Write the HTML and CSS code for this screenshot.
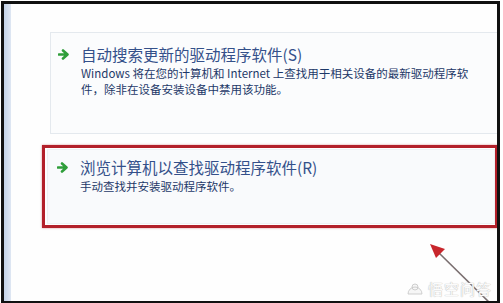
FILE: index.html
```html
<!DOCTYPE html>
<html lang="zh-CN">
<head>
    <meta charset="UTF-8">
    <title>更新驱动程序软件</title>
    <link rel="stylesheet" href="styles.css">
</head>
<body>
    <div class="screen">
        <div class="side-strip"></div>
        <div class="content">
            <div class="option">
                <div class="option-title">
                    <svg class="go-icon" width="12" height="11" viewBox="0 0 12 11"><path d="M1 5.5h7M5 1.5l4.5 4-4.5 4" fill="none" stroke="#2f9e3a" stroke-width="2.6" stroke-linecap="round" stroke-linejoin="round"/></svg>
                    <span>自动搜索更新的驱动程序软件(S)</span>
                </div>
                <p class="option-desc">Windows 将在您的计算机和 Internet 上查找用于相关设备的最新驱动程序软<br>件，除非在设备安装设备中禁用该功能。</p>
            </div>
            <div class="highlight">
                <div class="option option-browse">
                    <div class="option-title">
                        <svg class="go-icon" width="12" height="11" viewBox="0 0 12 11"><path d="M1 5.5h7M5 1.5l4.5 4-4.5 4" fill="none" stroke="#2f9e3a" stroke-width="2.6" stroke-linecap="round" stroke-linejoin="round"/></svg>
                        <span>浏览计算机以查找驱动程序软件(R)</span>
                    </div>
                    <p class="option-desc">手动查找并安装驱动程序软件。</p>
                </div>
            </div>
        </div>
        <!-- 标注箭头 -->
        <svg class="pointer" width="80" height="70" viewBox="0 0 80 70">
            <line x1="70" y1="68" x2="14" y2="13" stroke="#7a6f70" stroke-width="1.6"/>
            <path d="M5 4 L20 9 L11 18 Z" fill="#c8262c"/>
        </svg>
        <div class="watermark">
            <svg class="wm-logo" width="18" height="14" viewBox="0 0 18 14"><path d="M2 12 A7 7 0 0 1 16 12 Z M6 5 A3 3 0 1 1 12 5 A3 3 0 1 1 6 5" fill="#f6f6f6" stroke="#c4c4c4" stroke-width="0.8"/></svg>
            <span>悟空问答</span>
        </div>
    </div>
</body>
</html>
```

FILE: styles.css
```css
body {
    margin: 0;
    background: #fff;
    font-family: "Noto Sans CJK SC", "Noto Sans", sans-serif;
}

.screen {
    position: relative;
    display: flex;
    width: 499px;
    height: 302px;
    margin: 1px 3px 0 1px;
    box-sizing: border-box;
    border: 3px solid #111;
    border-bottom-width: 2px;
    background: #fefefe;
    overflow: hidden;
}

.side-strip {
    width: 7px;
    flex-shrink: 0;
    background: linear-gradient(to right, #c3d2e8, #dfe7f3);
}

.content {
    flex: 1;
    padding: 28px 0 0 39px;
    min-width: 0;
}

.option {
    background: #fbfcfd;
    border: 1px solid #e4e9ee;
    border-right: none;
    padding: 11px 0 0 7px;
    height: 102px;
    box-sizing: border-box;
}

.option-title {
    display: flex;
    align-items: center;
    gap: 11px;
    font-size: 15.5px;
    line-height: 20px;
    color: #34508a;
    white-space: nowrap;
}

.go-icon {
    flex-shrink: 0;
}

.option-desc {
    margin: 1px 0 0 23px;
    font-size: 11.5px;
    line-height: 16px;
    color: #1d3868;
    white-space: nowrap;
}

.highlight {
    margin: 11px -1px 0 -8px;
    height: 83px;
    box-sizing: border-box;
    border: 3px solid #b3202a;
    box-shadow: 0 0 2px rgba(179, 32, 42, 0.5);
    padding: 1px 0 1px 2px;
}

.option-browse {
    height: 100%;
    padding: 7px 0 0 9px;
    border: 1px solid #eef1f4;
    background: #f9fafc;
}

.pointer {
    position: absolute;
    left: 421px;
    top: 236px;
}

.watermark {
    position: absolute;
    left: 402px;
    top: 276px;
    display: flex;
    align-items: center;
    gap: 4px;
    font-size: 15px;
    line-height: 18px;
    letter-spacing: 1px;
    color: #fbfbfb;
    text-shadow: 0 0 1px #b8b8b8, 0 0 1px #c8c8c8;
}
```
